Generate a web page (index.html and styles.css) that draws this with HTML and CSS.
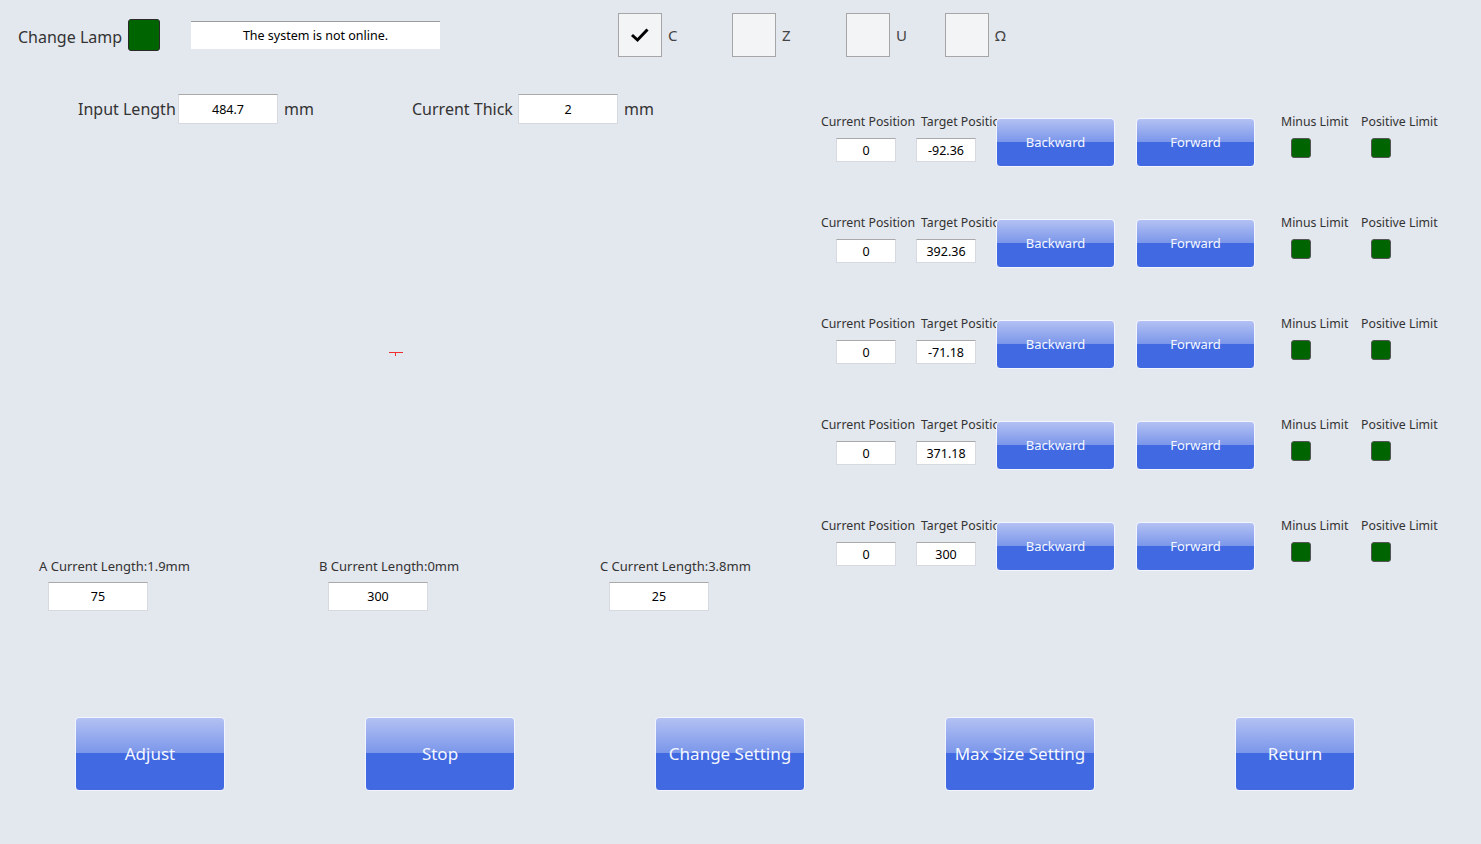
FILE: index.html
```html
<!DOCTYPE html>
<html>
<head>
<meta charset="utf-8">
<title>Change Lamp</title>
<link rel="stylesheet" href="styles.css">
</head>
<body>
<div class="page">
  <header class="top">
    <span class="lamp-label">Change Lamp</span>
    <span class="lamp big"></span>
    <div class="status">The system is not online.</div>
    <div class="checks">
      <div class="check w114"><span class="box"><svg width="20" height="16" viewBox="0 0 20 16"><polyline points="2,8 7.5,13 17.5,2.5" fill="none" stroke="#000" stroke-width="3"/></svg></span><span class="cl">C</span></div>
      <div class="check w114"><span class="box"></span><span class="cl">Z</span></div>
      <div class="check w99"><span class="box"></span><span class="cl">U</span></div>
      <div class="check"><span class="box"></span><span class="cl">Ω</span></div>
    </div>
  </header>

  <div class="main">
    <section class="left">
      <div class="params">
        <div class="param p1"><span class="plabel l1">Input Length</span><span class="field f100 h30">484.7</span><span class="unit">mm</span></div>
        <div class="param"><span class="plabel l2">Current Thick</span><span class="field f100 h30">2</span><span class="unit">mm</span></div>
      </div>
      <div class="canvas"><span class="marker"></span></div>
      <div class="lengths">
        <div class="len"><div class="llabel">A Current Length:1.9mm</div><span class="field f100 h28">75</span></div>
        <div class="len"><div class="llabel">B Current Length:0mm</div><span class="field f100 h28">300</span></div>
        <div class="len"><div class="llabel">C Current Length:3.8mm</div><span class="field f100 h28">25</span></div>
      </div>
    </section>

    <section class="axes">
      <div class="axis">
        <div class="cell c1"><div class="slabel">Current Position</div><span class="field small">0</span></div>
        <div class="cell c2"><div class="slabel">Target Position</div><span class="field small">-92.36</span></div>
        <button class="btn row-btn">Backward</button>
        <button class="btn row-btn fwd">Forward</button>
        <div class="cell lim first"><div class="slabel">Minus Limit</div><span class="lamp sm"></span></div>
        <div class="cell lim"><div class="slabel">Positive Limit</div><span class="lamp sm"></span></div>
      </div>
      <div class="axis">
        <div class="cell c1"><div class="slabel">Current Position</div><span class="field small">0</span></div>
        <div class="cell c2"><div class="slabel">Target Position</div><span class="field small">392.36</span></div>
        <button class="btn row-btn">Backward</button>
        <button class="btn row-btn fwd">Forward</button>
        <div class="cell lim first"><div class="slabel">Minus Limit</div><span class="lamp sm"></span></div>
        <div class="cell lim"><div class="slabel">Positive Limit</div><span class="lamp sm"></span></div>
      </div>
      <div class="axis">
        <div class="cell c1"><div class="slabel">Current Position</div><span class="field small">0</span></div>
        <div class="cell c2"><div class="slabel">Target Position</div><span class="field small">-71.18</span></div>
        <button class="btn row-btn">Backward</button>
        <button class="btn row-btn fwd">Forward</button>
        <div class="cell lim first"><div class="slabel">Minus Limit</div><span class="lamp sm"></span></div>
        <div class="cell lim"><div class="slabel">Positive Limit</div><span class="lamp sm"></span></div>
      </div>
      <div class="axis">
        <div class="cell c1"><div class="slabel">Current Position</div><span class="field small">0</span></div>
        <div class="cell c2"><div class="slabel">Target Position</div><span class="field small">371.18</span></div>
        <button class="btn row-btn">Backward</button>
        <button class="btn row-btn fwd">Forward</button>
        <div class="cell lim first"><div class="slabel">Minus Limit</div><span class="lamp sm"></span></div>
        <div class="cell lim"><div class="slabel">Positive Limit</div><span class="lamp sm"></span></div>
      </div>
      <div class="axis">
        <div class="cell c1"><div class="slabel">Current Position</div><span class="field small">0</span></div>
        <div class="cell c2"><div class="slabel">Target Position</div><span class="field small">300</span></div>
        <button class="btn row-btn">Backward</button>
        <button class="btn row-btn fwd">Forward</button>
        <div class="cell lim first"><div class="slabel">Minus Limit</div><span class="lamp sm"></span></div>
        <div class="cell lim"><div class="slabel">Positive Limit</div><span class="lamp sm"></span></div>
      </div>
    </section>
  </div>

  <footer class="actions">
    <div class="slot"><button class="btn big-btn">Adjust</button></div>
    <div class="slot"><button class="btn big-btn">Stop</button></div>
    <div class="slot"><button class="btn big-btn">Change Setting</button></div>
    <div class="slot"><button class="btn big-btn">Max Size Setting</button></div>
    <div class="slot"><button class="btn big-btn narrow">Return</button></div>
  </footer>
</div>
</body>
</html>
```

FILE: styles.css
```css
* { box-sizing: border-box; }
html, body { margin: 0; padding: 0; }
body {
  background: #e3e7ee;
  font-family: "Noto Sans", "Open Sans", sans-serif;
  color: #333;
}
.page {
  width: 1481px;
  height: 844px;
  overflow: hidden;
}

/* top bar */
.top {
  display: flex;
  align-items: center;
  height: 57px;
  padding: 13px 0 0 18px;
}
.lamp-label {
  flex: none;
  width: 110px;
  margin-top: 3px;
  font-size: 16px;
  color: #333;
  white-space: nowrap;
}
.lamp {
  display: inline-block;
  flex: none;
  background: #006400;
  border-radius: 3px;
}
.lamp.big {
  width: 32px;
  height: 32px;
  border: 1px solid #2a2a2a;
}
.status {
  flex: none;
  margin-left: 31px;
  width: 249px;
  height: 28px;
  background: #fff;
  border-top: 1px solid #9c9c9c;
  font-size: 12.5px;
  color: #000;
  display: flex;
  align-items: center;
  justify-content: center;
}
.checks {
  display: flex;
  margin-left: 178px;
}
.check {
  display: flex;
  align-items: center;
  flex: none;
}
.check.w114 { width: 114px; }
.check.w99 { width: 99px; }
.box {
  flex: none;
  width: 44px;
  height: 44px;
  background: #f3f4f6;
  border: 1px solid #a6a6a6;
  display: flex;
  align-items: center;
  justify-content: center;
}
.cl {
  margin-left: 6px;
  font-size: 15px;
  color: #444;
}

/* main */
.main {
  display: flex;
  height: 560px;
}
.left {
  flex: none;
  width: 821px;
  display: flex;
  flex-direction: column;
  padding-bottom: 6px;
}
.params {
  display: flex;
  margin-top: 37px;
  padding-left: 78px;
  height: 30px;
}
.param {
  display: flex;
  align-items: center;
  flex: none;
}
.param.p1 { width: 334px; }
.plabel {
  flex: none;
  font-size: 16px;
  color: #333;
  white-space: nowrap;
}
.plabel.l1 { width: 100px; }
.plabel.l2 { width: 106px; }
.unit {
  font-size: 16px;
  color: #333;
  margin-left: 6px;
}
.field {
  display: inline-flex;
  flex: none;
  align-items: center;
  justify-content: center;
  background: #fff;
  border: 1px solid #d6dae0;
  border-top-color: #a9a9a9;
  font-size: 12.5px;
  color: #000;
}
.f100 { width: 100px; }
.h30 { height: 30px; }
.h28 { height: 29px; }
.field.small {
  width: 60px;
  height: 24px;
  margin-top: 8px;
}

.canvas {
  flex: 1;
  position: relative;
}
.marker {
  position: absolute;
  left: 389px;
  top: 228px;
  width: 14px;
  height: 1px;
  background: #ee3030;
}
.marker::after {
  content: "";
  position: absolute;
  left: 6px;
  top: 1px;
  width: 1px;
  height: 3px;
  background: #ee3030;
}

.lengths {
  display: flex;
  padding-left: 39px;
}
.len { flex: none; width: 280px; }
.len:nth-child(2) { width: 281px; }
.llabel {
  font-size: 13px;
  line-height: 17px;
  color: #333;
  white-space: nowrap;
  margin-bottom: 7px;
}
.len .field { margin-left: 9px; }

/* axes */
.axes {
  padding-top: 55px;
}
.axis {
  display: flex;
  align-items: flex-start;
  height: 101px;
}
.cell { display: flex; flex-direction: column; flex: none; }
.slabel {
  font-size: 12.3px;
  line-height: 17px;
  padding-top: 1px;
  color: #333;
  white-space: nowrap;
}
.c1 { width: 95px; }
.c1 .field { margin-left: 15px; }
.c2 { width: 81px; }
.c2 .slabel { padding-left: 5px; }
.lim { width: 80px; }
.lim.first { margin-left: 26px; }
.lamp.sm {
  width: 20px;
  height: 20px;
  margin: 8px 0 0 10px;
  border: 1px solid #555;
}

/* buttons */
.btn {
  flex: none;
  font-family: inherit;
  color: #f4f7ff;
  border: 1px solid #f2f5ff;
  border-radius: 4px;
  background: linear-gradient(to bottom, #b3c1f3 0%, #7c97ea 48%, #4169e1 48%, #4169e1 100%);
  padding: 0;
  cursor: pointer;
}
.row-btn {
  position: relative;
  z-index: 1;
  width: 119px;
  height: 49px;
  margin-top: 6px;
  margin-left: -1px;
  font-size: 13px;
  padding-bottom: 2px;
}
.row-btn.fwd { margin-left: 21px; }

.actions {
  display: flex;
  padding: 100px 0 0 75px;
}
.slot { flex: none; width: 290px; }
.big-btn {
  width: 150px;
  height: 74px;
  font-size: 17px;
  padding-bottom: 2px;
}
.big-btn.narrow { width: 120px; }
```
